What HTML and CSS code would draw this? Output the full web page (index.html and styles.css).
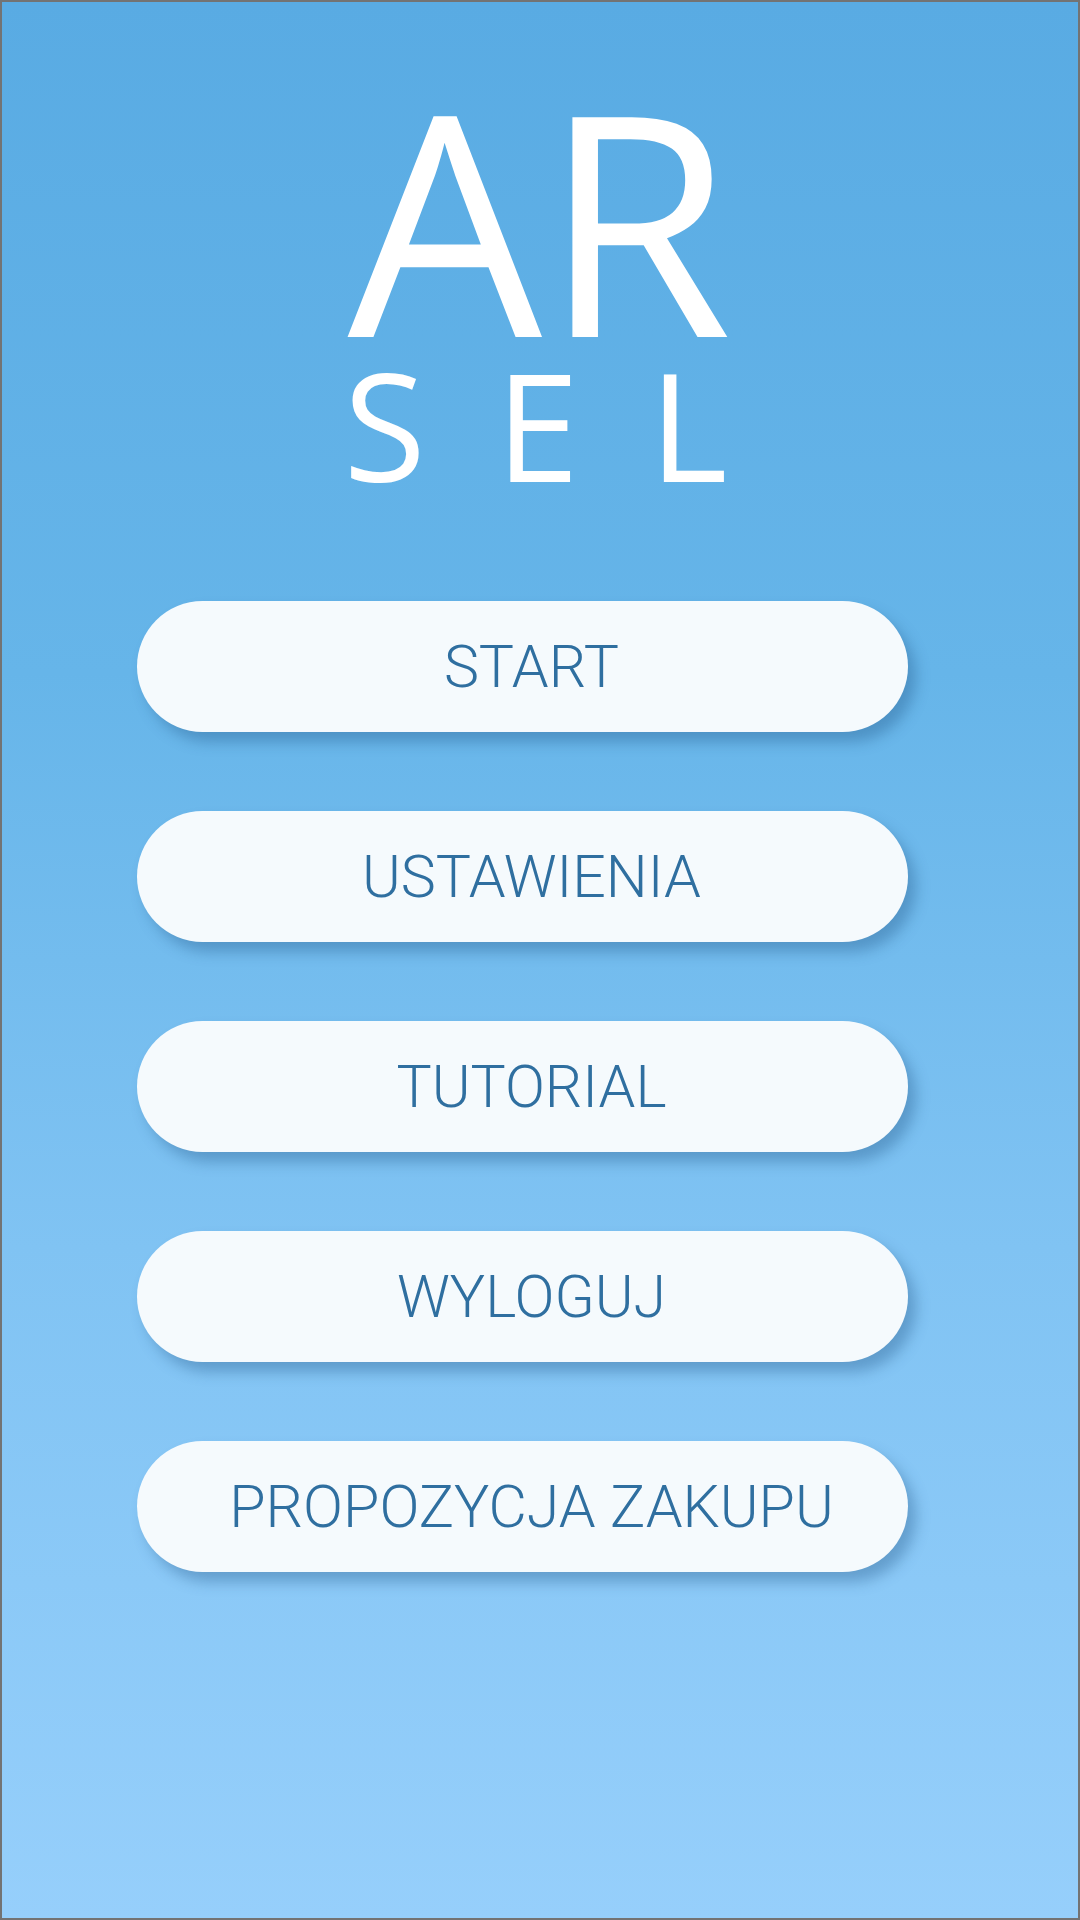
FILE: index.html
```html
<!DOCTYPE html>
<html lang="pl">
<head>
<meta charset="utf-8">
<title>ARSEL</title>
<link rel="stylesheet" href="styles.css">
</head>
<body>
<div class="screen">
  <header class="logo">
    <div class="logo-ar">AR</div>
    <div class="logo-sel">SEL</div>
  </header>
  <nav class="menu">
    <button class="menu-btn">START</button>
    <button class="menu-btn">USTAWIENIA</button>
    <button class="menu-btn">TUTORIAL</button>
    <button class="menu-btn">WYLOGUJ</button>
    <button class="menu-btn">PROPOZYCJA ZAKUPU</button>
  </nav>
</div>
</body>
</html>
```
FILE: styles.css
```css
html, body {
  margin: 0;
  padding: 0;
}
body {
  width: 1080px;
  height: 1920px;
  overflow: hidden;
}
.screen {
  box-sizing: border-box;
  width: 1080px;
  height: 1920px;
  border: 2px solid #737373;
  background: linear-gradient(to bottom, #59abe3 0%, #66b5e9 35%, #80c3f3 65%, #96cffb 100%);
  display: flex;
  flex-direction: column;
}
.logo {
  padding-top: 96px;
  display: flex;
  flex-direction: column;
  align-items: center;
  color: #ffffff;
  font-family: "Open Sans", "DejaVu Sans", sans-serif;
}
.logo-ar {
  font-size: 308px;
  line-height: 240px;
  font-weight: 400;
}
.logo-sel {
  margin-top: 31px;
  font-size: 150px;
  line-height: 110px;
  font-weight: 400;
  letter-spacing: 70px;
  margin-right: -61px;
}
.menu {
  margin-top: 122px;
  margin-left: 135px;
  display: flex;
  flex-direction: column;
  gap: 79px;
  width: 771px;
}
.menu-btn {
  height: 131px;
  width: 771px;
  border: none;
  border-radius: 66px;
  background: #f5fafd;
  box-shadow: 8px 10px 14px rgba(30, 80, 130, 0.35);
  font-family: Roboto, "Noto Sans", sans-serif;
  font-weight: 300;
  font-size: 59px;
  color: #2f6fa0;
  padding: 0 0 0 18px;
  display: flex;
  align-items: center;
  justify-content: center;
}
```
